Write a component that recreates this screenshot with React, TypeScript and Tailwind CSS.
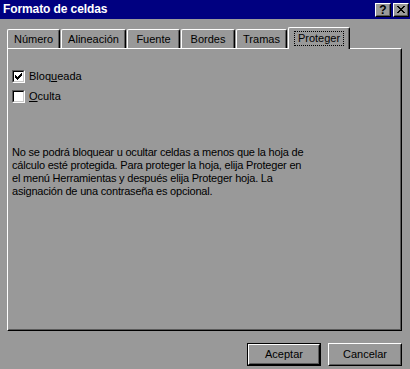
import React from 'react';

const tabs = [
  { name: 'Número', w: 'w-[53px]' },
  { name: 'Alineación', w: 'w-[65px]' },
  { name: 'Fuente', w: 'w-[53px]' },
  { name: 'Bordes', w: 'w-[54px]' },
  { name: 'Tramas', w: 'w-[51px]' },
];

// check mark pixels, one row per string
const checkRows = ['......#', '.....##', '#...###', '##.###.', '#####..', '.###...', '..#....'];

// raised 3d edge used by buttons
function Bevel({ children, className = '' }: { children: React.ReactNode; className?: string }) {
  return (
    <div className={`border border-t-white border-l-white border-r-black border-b-black ${className}`}>
      <div className="h-full w-full border border-transparent border-r-[#5a5a5a] border-b-[#5a5a5a] flex items-center justify-center">
        {children}
      </div>
    </div>
  );
}

function Check({ checked, label, accel }: { checked?: boolean; label: string; accel: number }) {
  return (
    <div className="flex items-center h-[20px]">
      <div className="w-[13px] h-[13px] border border-t-[#5a5a5a] border-l-[#5a5a5a] border-r-white border-b-white">
        <div className="w-full h-full bg-white border border-t-black border-l-black border-r-[#c8c8c8] border-b-[#c8c8c8] flex items-center justify-center">
          {checked && (
            <svg width="7" height="7" viewBox="0 0 7 7" shapeRendering="crispEdges">
              {checkRows.map((row, y) =>
                row.split('').map((c, x) =>
                  c === '#' ? <rect key={`${x}-${y}`} x={x} y={y} width="1" height="1" fill="black" /> : null
                )
              )}
            </svg>
          )}
        </div>
      </div>
      <span className="ml-[4px]">
        {label.slice(0, accel)}
        <span className="underline">{label[accel]}</span>
        {label.slice(accel + 1)}
      </span>
    </div>
  );
}

export default function App() {
  return (
    <div
      className="w-[410px] h-[369px] bg-[#999999] text-black text-[11px] leading-[13px] flex flex-col overflow-hidden"
      style={{ fontFamily: '"Liberation Sans", Arial, sans-serif' }}
    >
      {/* Title bar */}
      <div className="h-[19px] bg-[#000080] flex items-center pl-[3px] pr-[1px]">
        <span className="text-white font-bold text-[12px] tracking-[-0.1px]">Formato de celdas</span>
        <div className="ml-auto flex gap-[2px]">
          <Bevel className="w-[16px] h-[14px] bg-[#999999]">
            <span className="font-bold text-[12px] leading-none">?</span>
          </Bevel>
          <Bevel className="w-[16px] h-[14px] bg-[#999999]">
            <svg width="8" height="7" viewBox="0 0 8 7" shapeRendering="crispEdges">
              <path d="M0 0h2v1h1v1h2v-1h1v-1h2v1h-1v1h-1v1h-1v1h1v1h1v1h1v1h-2v-1h-1v-1h-2v1h-1v1h-2v-1h1v-1h1v-1h1v-1h-1v-1h-1v-1h-1z" fill="black" />
            </svg>
          </Bevel>
        </div>
      </div>

      {/* Tabs */}
      <div className="flex items-end pl-[7px] mt-[8px] h-[21px]">
        {tabs.map((t) => (
          <div
            key={t.name}
            className={`${t.w} h-[19px] mr-px flex items-center justify-center border-t border-l border-r border-t-white border-l-white border-r-black rounded-tl-[2px] rounded-tr-[2px] shadow-[inset_-1px_0_0_#5a5a5a]`}
          >
            {t.name}
          </div>
        ))}
        <div className="w-[62px] h-[22px] -mb-px relative z-10 bg-[#999999] flex items-center justify-center border-t border-l border-r border-t-white border-l-white border-r-black rounded-tl-[2px] rounded-tr-[2px] shadow-[inset_-1px_0_0_#5a5a5a]">
          <div className="border border-dotted border-black px-[3px] h-[15px] flex items-center">Proteger</div>
        </div>
      </div>

      {/* Panel */}
      <div className="ml-[7px] w-[395px] h-[283px] border border-t-white border-l-white border-r-black border-b-black">
        <div className="h-full border border-transparent border-r-[#5a5a5a] border-b-[#5a5a5a] pl-[3px] pt-[16px]">
          <Check checked label="Bloqueada" accel={4} />
          <Check label="Oculta" accel={0} />
          <p className="mt-[40px] tracking-[-0.2px]">
            No se podrá bloquear u ocultar celdas a menos que la hoja de
            <br />
            cálculo esté protegida. Para proteger la hoja, elija Proteger en
            <br />
            el menú Herramientas y después elija Proteger hoja. La
            <br />
            asignación de una contraseña es opcional.
          </p>
        </div>
      </div>

      {/* Buttons */}
      <div className="flex justify-end gap-[7px] pr-[8px] mt-[12px]">
        <div className="border border-black">
          <Bevel className="w-[72px] h-[21px]">Aceptar</Bevel>
        </div>
        <Bevel className="w-[74px] h-[23px]">Cancelar</Bevel>
      </div>
    </div>
  );
}
